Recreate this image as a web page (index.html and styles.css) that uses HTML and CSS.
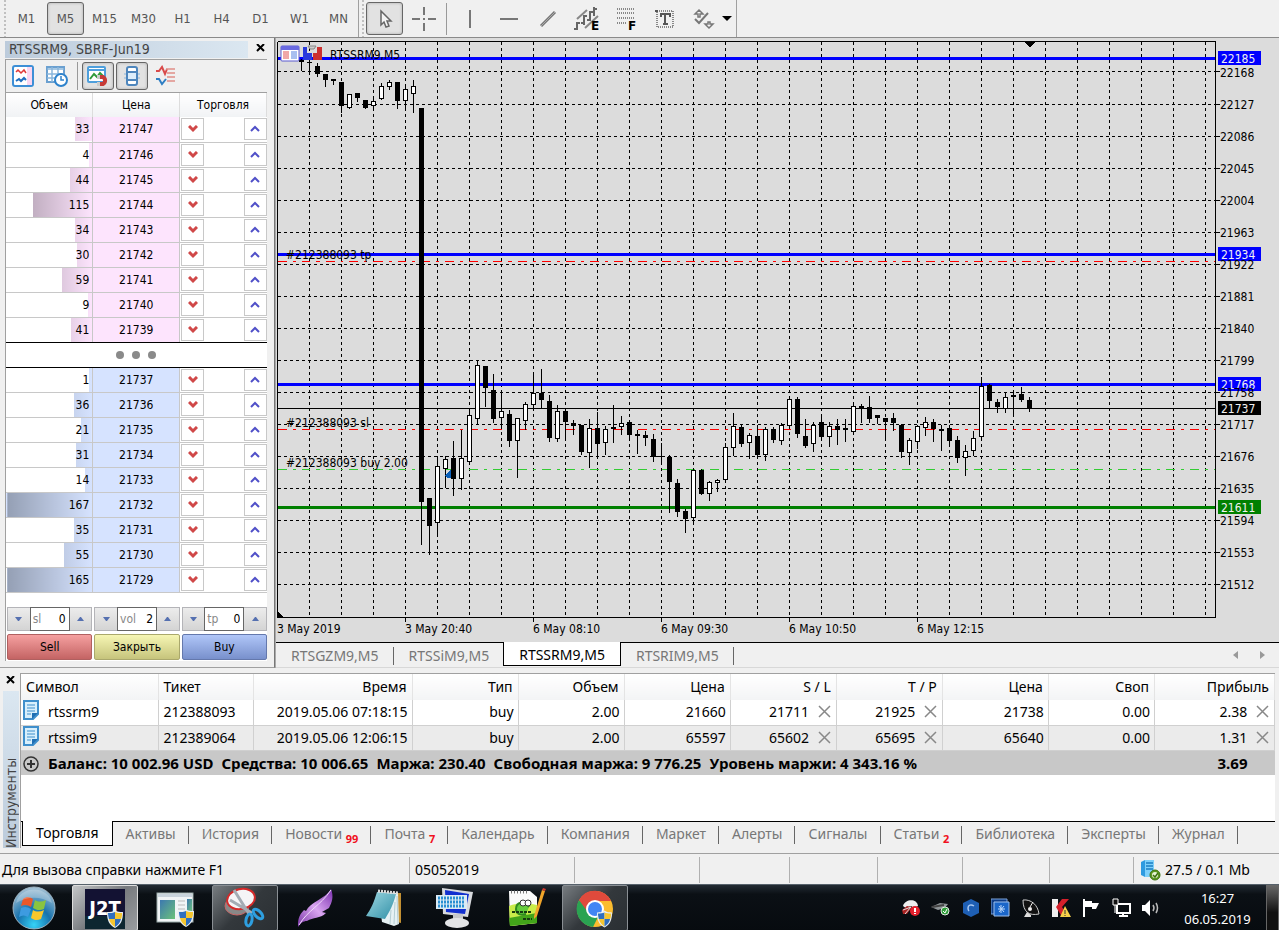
FILE: index.html
```html
<!DOCTYPE html>
<html lang="ru">

<head>
  <meta charset="UTF-8">
  <meta name="viewport" content="width=device-width, initial-scale=1.0">
  <title>RTSSRM9,M5</title>
  <link rel="stylesheet" href="styles.css">
</head>

<body>
  <header class="toolbar">
    <div class="toolbar-group">
      <span class="grip"></span>
      <button class="tool">M1</button>
      <button class="tool active">M5</button>
      <button class="tool">M15</button>
      <button class="tool">M30</button>
      <button class="tool">H1</button>
      <button class="tool">H4</button>
      <button class="tool">D1</button>
      <button class="tool">W1</button>
      <button class="tool">MN</button>
    </div>
    <div class="toolbar-group">
      <span class="grip"></span>
      <button class="tool active" aria-label="Cursor">
        <svg width="26" height="26"><path d="M9 5v14l3-3 2 5 3-1-2-5h4z" fill="#f4f4f4" stroke="#666" stroke-width="1.5"/></svg>
      </button>
      <button class="tool" aria-label="Crosshair">
        <svg width="26" height="26"><path d="M13 1v8M13 17v8M1 13h8M17 13h8M12 13h2" stroke="#777" stroke-width="2"/></svg>
      </button>
      <span class="divider"></span>
      <button class="tool" aria-label="Vertical line">
        <svg width="26" height="26"><path d="M13 4v18" stroke="#777" stroke-width="2"/></svg>
      </button>
      <button class="tool" aria-label="Horizontal line">
        <svg width="26" height="26"><path d="M4 13h18" stroke="#777" stroke-width="2"/></svg>
      </button>
      <button class="tool" aria-label="Trend line">
        <svg width="26" height="26"><path d="M6 20L20 6" stroke="#777" stroke-width="3"/><path d="M6 20L20 6" stroke="#aaa"/></svg>
      </button>
      <button class="tool" aria-label="Equidistant channel">
        <svg width="30" height="28" viewBox="-2 -1 30 28"><path d="M3 13L13 4M11 22L24 10" stroke="#888" stroke-width="2"/><path d="M3 16v8M0 23h3M3 17h3M10 9v10M7 17h3M10 10h3M16 5v10M13 14h3M16 6h3M20 1v9M20 3h3" stroke="#666" stroke-width="2"/><text class="icon-letter" x="17" y="24">E</text></svg>
      </button>
      <button class="tool" aria-label="Fibonacci">
        <svg width="30" height="28" viewBox="-2 -1 30 28"><path d="M4 3h18M4 7h18M4 12h18M4 17h10" stroke="#888" stroke-width="2" stroke-dasharray="1 1"/><text class="icon-letter" x="15" y="24">F</text></svg>
      </button>
      <button class="tool" aria-label="Text">
        <svg width="26" height="26"><rect x="5" y="5" width="16" height="16" fill="none" stroke="#666" stroke-width="1.5" stroke-dasharray="1 1"/><path d="M3 4h3v2H3z" fill="#555"/><path d="M9 11V8h9v3M13 8v10M11 18h5" fill="none" stroke="#555" stroke-width="2"/></svg>
      </button>
      <button class="tool" aria-label="Objects">
        <svg width="26" height="26"><path d="M8 4l4 4H9v3H7V8H4zM18 22l-4-4h3v-2h2v2h3z" fill="#f4f4f4" stroke="#777" stroke-width="1.5"/><path d="M4 13l4 4 9-10" fill="none" stroke="#777" stroke-width="2"/></svg>
      </button>
      <svg class="caret" width="10" height="6"><path d="M0 0h10L5 5z"/></svg>
    </div>
  </header>

  <main class="workspace">
    <aside class="depth">
      <div class="depth-title">
        <h2>RTSSRM9, SBRF-Jun19</h2>
        <button class="close" aria-label="Close"><svg width="9" height="8"><path d="M1 0l7 7M8 0L1 7" stroke="#000" stroke-width="2"/></svg></button>
      </div>
      <div class="depth-body">
        <div class="depth-tools">
          <button aria-label="Ticks">
            <svg width="22" height="22"><rect x="1" y="1" width="20" height="20" rx="2" fill="#fff" stroke="#3d8fd6" stroke-width="2"/><path d="M15 2h5v18h-5z" fill="#fbd6f0"/><path d="M4 7l2-2 3 3 3-3 2 3" fill="none" stroke="#e03a3a" stroke-width="1.5"/><path d="M4 16l3-2 2 2 3-3 2 2" fill="none" stroke="#1f6fc0" stroke-width="2"/></svg>
          </button>
          <button aria-label="Time and sales">
            <svg width="22" height="22"><path d="M1 2h17v15H1z" fill="#fff" stroke="#6ba0d0" stroke-width="2"/><path d="M1 4h17M1 9h17M1 13h17M6 2v15M12 2v15" stroke="#8ab6dc" stroke-width="1.5"/><circle cx="15" cy="15" r="6" fill="#fff" stroke="#2f83cc" stroke-width="2"/><path d="M15 11v4h3" fill="none" stroke="#2f83cc" stroke-width="1.5"/></svg>
          </button>
          <span class="divider"></span>
          <button class="active" aria-label="Lock">
            <svg width="22" height="22"><rect x="1" y="2" width="17" height="15" rx="1" fill="#fff" stroke="#4e9fdc" stroke-width="2"/><path d="M1 5h17" stroke="#4e9fdc" stroke-width="2"/><path d="M3 14l4-5 3 3 3-4 3 3" fill="none" stroke="#2f9a3a" stroke-width="2"/><path d="M11 12h5a4 4 0 010 7h-5" fill="none" stroke="#c63b37" stroke-width="4"/><path d="M10 10h3v4h-3zM10 17h3v4h-3z" fill="#ccc"/></svg>
          </button>
          <button class="active" aria-label="Center">
            <svg width="22" height="22"><rect x="6" y="2" width="10" height="18" rx="2" fill="#fff" stroke="#4e86bd" stroke-width="2"/><path d="M7 8h8v6H7z" fill="#dcedfb"/><path d="M5 7h12M5 15h12" stroke="#4e86bd" stroke-width="2"/><path d="M4 8v2M18 8v2M4 12v2M18 12v2" stroke="#8ab6dc"/></svg>
          </button>
          <button aria-label="Spread">
            <svg width="22" height="22"><path d="M1 6h3l3-4 3 7 2-5" fill="none" stroke="#d94a4a" stroke-width="2"/><path d="M1 14h3l3 5 4-5" fill="none" stroke="#2f7fc4" stroke-width="2"/><path d="M11 4h9M12 8h8M12 12h8M12 16h8" stroke="#e08e88" stroke-width="1.5"/></svg>
          </button>
        </div>
        <table class="depth-table">
          <thead>
            <tr><th>Объем</th><th>Цена</th><th>Торговля</th></tr>
          </thead>
          <tbody class="asks" id="asks"></tbody>
          <tbody class="spread">
            <tr><td colspan="3"><i></i><i></i><i></i></td></tr>
          </tbody>
          <tbody class="bids" id="bids"></tbody>
        </table>
        <form class="order">
          <div class="spinner">
            <button type="button" aria-label="Decrease sl"><svg width="7" height="4"><path d="M0 0h7L4 4H3z"/></svg></button>
            <label>sl <input type="text" value="0"></label>
            <button type="button" aria-label="Increase sl"><svg width="7" height="4"><path d="M0 4h7L4 0H3z"/></svg></button>
          </div>
          <div class="spinner">
            <button type="button" aria-label="Decrease vol"><svg width="7" height="4"><path d="M0 0h7L4 4H3z"/></svg></button>
            <label>vol <input type="text" value="2"></label>
            <button type="button" aria-label="Increase vol"><svg width="7" height="4"><path d="M0 4h7L4 0H3z"/></svg></button>
          </div>
          <div class="spinner">
            <button type="button" aria-label="Decrease tp"><svg width="7" height="4"><path d="M0 0h7L4 4H3z"/></svg></button>
            <label>tp <input type="text" value="0"></label>
            <button type="button" aria-label="Increase tp"><svg width="7" height="4"><path d="M0 4h7L4 0H3z"/></svg></button>
          </div>
          <button type="button" class="deal sell">Sell</button>
          <button type="button" class="deal flat">Закрыть</button>
          <button type="button" class="deal buy">Buy</button>
        </form>
      </div>
    </aside>

    <section class="charts">
      <svg class="chart" id="chart"></svg>
      <nav class="chart-tabs">
        <a href="#">RTSGZM9,M5</a>
        <a href="#">RTSSiM9,M5</a>
        <a href="#" class="active">RTSSRM9,M5</a>
        <a href="#">RTSRIM9,M5</a>
        <span class="tab-arrows">
          <button aria-label="Previous"><svg width="5" height="8"><path d="M5 0v8L0 4z" fill="#999"/></svg></button>
          <button aria-label="Next"><svg width="5" height="8"><path d="M0 0v8l5-4z" fill="#999"/></svg></button>
        </span>
      </nav>
    </section>
  </main>

  <section class="terminal">
    <div class="terminal-side">
      <button class="close" aria-label="Close"><svg width="9" height="8"><path d="M1 0l7 7M8 0L1 7" stroke="#000" stroke-width="2"/></svg></button>
      <h2>Инструменты</h2>
    </div>
    <div class="terminal-body">
      <table class="trades">
        <colgroup>
          <col class="c-symbol"><col class="c-ticket"><col class="c-time">
          <col><col><col><col><col><col><col>
          <col class="c-profit">
        </colgroup>
        <thead>
          <tr>
            <th>Символ</th><th>Тикет</th><th>Время</th><th>Тип</th><th>Объем</th><th>Цена</th>
            <th>S / L</th><th>T / P</th><th>Цена</th><th>Своп</th><th>Прибыль</th>
          </tr>
        </thead>
        <tbody id="trades"></tbody>
        <tfoot>
          <tr>
            <td colspan="10">
              <svg class="plus" width="16" height="16"><circle cx="8" cy="8" r="7" fill="none" stroke="#333" stroke-width="1.5"/><path d="M8 4v8M4 8h8" stroke="#333" stroke-width="2"/></svg><b>Баланс: 10 002.96 USD</b><b>Средства: 10 006.65</b><b>Маржа: 230.40</b><b>Свободная маржа: 9 776.25</b><b>Уровень маржи: 4 343.16 %</b>
            </td>
            <td class="total">3.69</td>
          </tr>
        </tfoot>
      </table>
      <nav class="terminal-tabs">
        <a href="#" class="active">Торговля</a>
        <a href="#">Активы</a>
        <a href="#">История</a>
        <a href="#">Новости <sub>99</sub></a>
        <a href="#">Почта <sub>7</sub></a>
        <a href="#">Календарь</a>
        <a href="#">Компания</a>
        <a href="#">Маркет</a>
        <a href="#">Алерты</a>
        <a href="#">Сигналы</a>
        <a href="#">Статьи <sub>2</sub></a>
        <a href="#">Библиотека</a>
        <a href="#">Эксперты</a>
        <a href="#">Журнал</a>
      </nav>
    </div>
  </section>

  <div class="status">
    <span>Для вызова справки нажмите F1</span>
    <span>05052019</span>
    <span></span>
    <span></span>
    <span></span>
    <span></span>
    <span></span>
    <span></span>
    <span class="traffic">
      <svg width="22" height="22"><path d="M2 3l4-2h9v17H6l-4-2z" fill="#2f9be0"/><path d="M6 1h9v17H6z" fill="#7fd0fa"/><path d="M7 4h7M7 7h7M7 10h7" stroke="#1c7fc4" stroke-width="1.5"/><circle cx="16" cy="16" r="5" fill="#5d9a1f" stroke="#3c7010"/><circle cx="16" cy="16" r="3" fill="#e8f4d8"/><path d="M14 16l2 2 3-4" fill="none" stroke="#3c7010" stroke-width="1.5"/></svg>
      27.5 / 0.1 Mb
    </span>
  </div>

  <footer class="taskbar">
    <svg width="0" height="0" class="defs">
      <defs>
        <radialGradient id="orb" cx="50%" cy="90%" r="90%">
          <stop offset="0" stop-color="#35d3f7"/><stop offset=".45" stop-color="#1772ad"/><stop offset="1" stop-color="#a9c4d6"/>
        </radialGradient>
        <linearGradient id="feather" x1="0" y1="1" x2="1" y2="0">
          <stop offset="0" stop-color="#7b36a8"/><stop offset=".5" stop-color="#d9a5f0"/><stop offset="1" stop-color="#7a2fae"/>
        </linearGradient>
        <linearGradient id="pad" x1="0" y1="0" x2="1" y2="1">
          <stop offset="0" stop-color="#9fd8e2"/><stop offset="1" stop-color="#2f8fa6"/>
        </linearGradient>
        <linearGradient id="screen" x1="0" y1="0" x2="1" y2="1">
          <stop offset="0" stop-color="#3c78b0"/><stop offset="1" stop-color="#6cc27a"/>
        </linearGradient>
        <symbol id="shield" viewBox="0 0 16 18">
          <path d="M8 0c2 2 5 2 8 2 0 8-2 13-8 16C2 15 0 10 0 2c3 0 6 0 8-2z" fill="#e8eef4"/>
          <path d="M8 2v7H2a20 20 0 01-1-6c3 0 5 0 7-1z" fill="#2f6fc0"/><path d="M8 2v7h6c1-2 1-4 1-6-3 0-5 0-7-1z" fill="#f6c62f"/>
          <path d="M2 9h6v8c-3-2-5-4-6-8z" fill="#f6c62f"/><path d="M14 9H8v8c3-2 5-4 6-8z" fill="#2f6fc0"/>
        </symbol>
      </defs>
    </svg>
    <button class="start" aria-label="Start">
      <svg width="44" height="44"><circle cx="22" cy="22" r="21" fill="url(#orb)" stroke="#9fb4c2"/><path d="M11 13c4-3 7-2 10 0l-2 8c-3-2-6-3-10-1z" fill="#e9582a"/><path d="M23 14c3 2 7 2 11 0l-2 9c-4 2-8 1-11-1z" fill="#8ac43f"/><path d="M9 22c4-2 7-1 10 1l-3 8c-3-2-6-2-9 0z" fill="#3d9be0"/><path d="M21 24c3 2 7 2 11 0l-3 9c-4 2-7 1-10-1z" fill="#fac72b"/><path d="M4 17C8-1 36-1 40 17c-12-7-24-7-36 0z" fill="#fff" opacity=".25"/></svg>
    </button>
    <button class="task lit" aria-label="J2T">
      <svg width="44" height="44"><rect x="2" y="3" width="40" height="40" fill="#131233"/><path d="M2 30h40v13H2z" fill="#0d2630"/><text class="logo-text" x="22" y="29">J2T</text><use href="#shield" x="24" y="24" width="16" height="18"/></svg>
    </button>
    <button class="task" aria-label="Application">
      <svg width="44" height="44"><rect x="4" y="7" width="36" height="29" fill="#f1f4f6" stroke="#9aa"/><path d="M5 8h34v3H5z" fill="#c9d3dc"/><path d="M7 14h15v19H7z" fill="url(#screen)"/><path d="M25 15h7M25 19h7M25 23h7M25 27h7" stroke="#bbb"/><path d="M34 13h5v13h-5z" fill="url(#screen)"/><use href="#shield" x="25" y="23" width="16" height="18"/></svg>
    </button>
    <button class="task open" aria-label="Snipping tool">
      <svg width="44" height="44"><ellipse cx="14" cy="20" rx="12" ry="9" fill="#888" stroke="#c66"/><ellipse cx="18" cy="13" rx="14" ry="10" fill="#f5f5f7" stroke="#d42a2a" stroke-width="2" transform="rotate(-12 18 13)"/><path d="M11 4l15 24M7 14l22 13" stroke="#a4acb4" stroke-width="3"/><ellipse cx="26" cy="34" rx="3" ry="6" fill="none" stroke="#2e9fe0" stroke-width="3" transform="rotate(12 26 34)"/><ellipse cx="35" cy="28" rx="3" ry="6" fill="none" stroke="#2e9fe0" stroke-width="3" transform="rotate(-45 35 28)"/></svg>
    </button>
    <button class="task" aria-label="Feather">
      <svg width="44" height="44"><path d="M5 41c0-6 0-11 6-17l2 1C17 16 32 13 38 3c3 8 1 13-2 19l-7 4 4 1c-6 6-13 4-19 8-4 0-6 2-9 6z" fill="url(#feather)"/><path d="M6 39C15 24 27 20 38 4" fill="none" stroke="#f0dcfa"/></svg>
    </button>
    <button class="task" aria-label="Notepad">
      <svg width="44" height="44"><path d="M34 7h4v30l-4-1z" fill="#c39033"/><path d="M15 6l20 1 1 31-5 2-12-4z" fill="#e6f1f4"/><path d="M14 6l19 2c-3 11-6 17-11 25L3 30C8 23 11 16 14 6z" fill="url(#pad)"/><path d="M34 10l1 28M32 16l-1 22M28 24l-1 14" stroke="#b4cdd3"/><path d="M15 5l20 2" stroke="#ddd" stroke-width="3" stroke-dasharray="2 1"/></svg>
    </button>
    <button class="task" aria-label="Remote desktop">
      <svg width="44" height="44"><path d="M9 2l31 4-5 25L10 28z" fill="#d8dade"/><path d="M12 4l24 4-4 20-19-2z" fill="#1230cf"/><path d="M20 28h10v8H20z" fill="#c6c8cb"/><ellipse cx="24" cy="37" rx="12" ry="5" fill="#e3e4e6"/><path d="M3 9h31v14H3z" fill="#dbeaf4"/><path d="M5 12h27M5 16h27M5 20h27" stroke="#2a8fd2" stroke-width="3" stroke-dasharray="2 1"/></svg>
    </button>
    <button class="task" aria-label="Notepad++">
      <svg width="44" height="44"><path d="M6 5h21l7 6v26L7 40z" fill="#fafafa"/><path d="M6 20c9-4 18-3 28-1v18L7 40z" fill="#c9ec4a"/><path d="M6 32l28-5v10L7 40z" fill="#43a51a"/><path d="M8 6h18" stroke="#777" stroke-width="3" stroke-dasharray="1 2"/><path d="M26 21c-4-7-13-5-13 2 0 5 5 7 10 5" fill="#65cc3d" stroke="#2f8a1f" stroke-width="2"/><circle cx="20" cy="17" r="3" fill="#fff" stroke="#333"/><circle cx="25" cy="17" r="3" fill="#fff" stroke="#333"/><path d="M9 26h20M20 33h9" stroke="#173a10" stroke-width="2" stroke-dasharray="3 1"/><path d="M31 30L39 4l3 1-8 25-3 3z" fill="#f0a52a"/><path d="M39 4l1-2 3 1-1 2z" fill="#d43b2f"/></svg>
    </button>
    <button class="task open" aria-label="Chrome">
      <svg width="44" height="44"><circle cx="22" cy="23" r="18" fill="#fbbc2f"/><path d="M6 14a18 18 0 0014 27l7-14-5-4z" fill="#2aa352"/><path d="M6 14a18 18 0 0132 1H22l-8 10z" fill="#e04a3c"/><circle cx="22" cy="23" r="9" fill="#fff"/><circle cx="22" cy="23" r="7" fill="#4285f4"/><use href="#shield" x="24" y="24" width="15" height="18"/></svg>
    </button>

    <div class="tray">
      <svg width="20" height="20"><path d="M2 8c2-7 14-8 15 0l-4 2c-3-3-5-2-7 1z" fill="#eee"/><path d="M1 12l5-4 5 1-5 7H2z" fill="#a22"/><path d="M2 12l8-3-6 7" fill="none" stroke="#ddd"/><circle cx="14" cy="13" r="5" fill="#e3202c"/><path d="M14 10v4M14 15v1" stroke="#fff" stroke-width="2"/></svg>
      <svg width="20" height="20"><path d="M0 9l9-4 8 1-3 4-7 2z" fill="#8e9497"/><path d="M1 9l12-2" stroke="#444" stroke-width="2"/><circle cx="14" cy="13" r="4" fill="#2f9e3a" stroke="#dfe8df"/><path d="M12 13l2 2 2-4" fill="none" stroke="#fff"/></svg>
      <svg width="20" height="20"><path d="M10 1l8 4v10l-8 4-8-4V5z" fill="#1e5fb4"/><path d="M13 8c-3-2-6-1-6 2 0 1 0 2 1 3" fill="none" stroke="#a9c9f2" stroke-width="1.5"/></svg>
      <svg width="20" height="20"><path d="M0 1h16v15H0z" fill="#0f3c86" stroke="#7ba2d8"/><path d="M3 4h15v14H3z" fill="#1b66c9" stroke="#9ec0ee"/><path d="M10 7v8M7 11h7M8 8l5 6M13 8l-5 6" stroke="#bcd8fb"/></svg>
      <svg width="20" height="20"><path d="M2 2c0 12 6 16 16 14C17 7 10 1 2 2z" fill="#111" stroke="#ccc"/><path d="M9 9l3-5" stroke="#eee"/><circle cx="9" cy="11" r="2" fill="#eee"/><path d="M3 19l3-5 4 3v2z" fill="#ddd"/></svg>
      <svg width="20" height="20"><path d="M1 1h6v18H1z" fill="#eee"/><path d="M5 9l6-8h7l-7 8 7 10h-7z" fill="#d5202b"/><path d="M14 8l6 11H9z" fill="#f6d04a"/><path d="M14 12v4M14 17v1" stroke="#333"/></svg>
      <svg width="20" height="20"><path d="M3 1v18" stroke="#fff" stroke-width="2"/><path d="M4 3h7v2h7l-3 6h-4V9H4z" fill="#fff"/></svg>
      <svg width="20" height="20"><path d="M6 6h13v9H6zM12 15v4M8 18h9" fill="none" stroke="#fff" stroke-width="2"/><path d="M2 1h5v6H2zM4 7v8" fill="#111" stroke="#fff"/></svg>
      <svg width="20" height="20"><path d="M1 7h3l5-5v16l-5-5H1z" fill="#fff"/><path d="M12 7q2 3 0 6M15 5q3 5 0 10" fill="none" stroke="#bbb" stroke-width="1.5"/></svg>
    </div>
    <time class="clock">16:27<br>06.05.2019</time>
    <button class="peek" aria-label="Show desktop"></button>
  </footer>

  <script src="script.js"></script>
</body>

</html>
```
FILE: styles.css
```css
*,
*::before,
*::after {
  box-sizing: border-box;
}
body {
  display: flex;
  flex-flow: column;
  min-height: 100vh;
  margin: 0;
  background: #f0f0f0;
  color: #000;
  font: 12px/16px "DejaVu Sans Condensed", "DejaVu Sans", sans-serif;
}
h2 {
  margin: 0;
  font-size: 14px;
  font-weight: normal;
}
a {
  color: inherit;
  text-decoration: none;
}
button {
  display: flex;
  align-items: center;
  justify-content: center;
  padding: 0;
  border: 0;
  background: none;
  color: inherit;
  font: inherit;
}
svg {
  flex: none;
}
table {
  width: 100%;
  border-collapse: collapse;
  table-layout: fixed;
}

/* toolbar */
.toolbar {
  display: flex;
  height: 38px;
  border-bottom: 1px solid #8a8a8a;
}
.toolbar-group {
  display: flex;
  align-items: center;
  gap: 2px;
  padding: 0 4px 0 3px;
  border-right: 1px solid #a0a0a0;
}
.toolbar-group:first-child {
  padding: 0 1px 0 4px;
}
.grip {
  align-self: stretch;
  width: 2px;
  background: repeating-linear-gradient(#c0c0c0 0 2px, #f0f0f0 2px 4px);
}
.tool {
  width: 37px;
  height: 33px;
  color: #555;
  font-size: 13px;
}
.active.tool,
.depth-tools .active {
  border: 1px solid #666;
  border-radius: 3px;
  background: #e2e2e2;
  box-shadow: inset 0 0 3px #aaa;
}
.divider {
  width: 1px;
  height: 32px;
  margin: 0 2px;
  background: #999;
}
.caret {
  margin-left: -2px;
}
.icon-letter {
  font: bold 12px "DejaVu Sans", sans-serif;
}

/* depth of market */
.workspace {
  display: flex;
  flex: 1;
}
.depth {
  display: flex;
  flex-flow: column;
  width: 275px;
  padding: 3px 7px 6px 5px;
  border-right: 1px solid #777;
  border-bottom: 1px solid #a0a0a0;
}
.depth-title {
  display: flex;
  justify-content: space-between;
  height: 18px;
}
.depth-title h2 {
  width: 243px;
  height: 17px;
  padding-left: 4px;
  background: linear-gradient(90deg, #bccbdb, #dbe7f1);
  color: #444;
  line-height: 17px;
}
.close {
  width: 14px;
  height: 14px;
}
.depth-body {
  flex: 1;
  border: 1px solid #a0a0a0;
  border-right: 0;
  border-bottom: 0;
  background: #fff;
}
.depth-tools {
  display: flex;
  align-items: center;
  gap: 2px;
  height: 33px;
  padding-left: 1px;
  border-bottom: 1px solid #a0a0a0;
  background: #f0f0f0;
}
.depth-tools button {
  width: 32px;
  height: 28px;
}
.depth-tools .divider {
  height: 28px;
}
.depth-table {
  text-align: center;
}
.depth-table th {
  height: 24px;
  padding: 0;
  border-right: 1px solid #ddd;
  background: linear-gradient(#fff, #f1f3f5);
  font-weight: normal;
}
.depth-table td {
  height: 25px;
  padding: 0;
  border-right: 1px solid #c8c8c8;
  border-bottom: 1px solid #c8c8c8;
}
.depth-table td:last-child {
  border-right: 0;
}
.volume {
  height: 24px;
  margin-left: auto;
  padding-right: 3px;
  background: right / 85px 100%;
  direction: rtl;
  line-height: 24px;
  text-align: right;
  white-space: nowrap;
}
.asks .volume {
  background-image: linear-gradient(90deg, #a898a8, #fde4fd);
}
.asks .price {
  background: #fde4fd;
}
.bids .volume {
  background-image: linear-gradient(90deg, #949fb4, #d6e3ff);
}
.bids .price {
  background: #d6e3ff;
}
.asks tr:last-child td,
.spread td {
  border-bottom-color: #000;
}
.spread i {
  display: inline-block;
  width: 8px;
  height: 8px;
  margin: 0 4px;
  border-radius: 50%;
  background: #8a8a8a;
}
.trade {
  display: flex;
  justify-content: space-between;
  padding-left: 1px;
}
.trade button {
  width: 23px;
  height: 22px;
  border: 1px solid #c8c8c8;
}
.order {
  display: grid;
  grid-template-columns: repeat(3, 1fr);
  gap: 3px 2px;
  padding: 14px 0 0 1px;
}
.spinner {
  display: flex;
  height: 24px;
  border: 1px solid #b4b4b8;
}
.spinner button {
  flex: 1;
  background: linear-gradient(#ececec, #d4d4d4);
  fill: #5570b0;
}
.spinner label {
  display: flex;
  align-items: center;
  width: 40px;
  margin: -1px 0;
  padding: 0 3px 0 2px;
  border: 1px solid #666;
  background: #fff;
  color: #888;
}
.spinner input {
  flex: 1;
  min-width: 0;
  padding: 0;
  border: 0;
  background: none;
  font: inherit;
  text-align: right;
}
.deal {
  height: 26px;
  border: 1px solid #999;
  border-radius: 2px;
}
.sell {
  border-color: #b06060;
  background: linear-gradient(#f5a0a0, #c46464);
}
.flat {
  border-color: #aaa86c;
  background: linear-gradient(#f6f6b4, #c6c47c);
}
.buy {
  border-color: #6478ac;
  background: linear-gradient(#b0c6f8, #7890cc);
}

/* chart */
.charts {
  display: flex;
  flex: 1;
  flex-flow: column;
  min-width: 0;
  border-left: 1px solid #aaa;
}
.chart {
  display: block;
  flex: 1;
  width: 100%;
  min-height: 604px;
  background: #dcdcdc;
  shape-rendering: crispEdges;
}
.chart text {
  font: 12px "DejaVu Sans Condensed", "DejaVu Sans", sans-serif;
}
.chart .tag {
  fill: #f0f0f0;
}
.chart .icons {
  shape-rendering: auto;
}
.grid {
  stroke: #000;
  stroke-dasharray: 3 3;
}
.level {
  stroke-width: 3;
}
.order-line {
  stroke-dasharray: 9 6 3 6;
}
.chart-tabs {
  display: flex;
  height: 26px;
  border-top: 1px solid #000;
  border-bottom: 1px solid #d8d8d8;
  color: #777;
  font: 14px/25px "Noto Sans", sans-serif;
}
.chart-tabs a {
  position: relative;
  padding: 0 15px;
}
.chart-tabs a::after,
.terminal-tabs a::after {
  content: "";
  position: absolute;
  top: 4px;
  right: 0;
  width: 1px;
  height: 18px;
  background: #666;
}
.chart-tabs .active,
.terminal-tabs .active {
  border: 1px solid #000;
  border-top: 0;
  background: #fff;
  color: #000;
}
.chart-tabs .active {
  height: 24px;
  margin: -1px 0 0 -1px;
}
.chart-tabs .active::after,
.terminal-tabs .active::after {
  content: none;
}
.tab-arrows {
  display: flex;
  gap: 22px;
  margin-left: auto;
  padding-right: 14px;
}

/* terminal */
.terminal {
  display: flex;
  height: 186px;
  padding: 5px 4px 5px 0;
  border-bottom: 1px solid #a0a0a0;
  font: 14px/24px "Noto Sans", sans-serif;
}
.terminal-side {
  display: flex;
  flex-flow: column;
  width: 20px;
  padding-left: 3px;
}
.terminal-side .close {
  margin-bottom: 4px;
}
.terminal-side h2 {
  flex: 1;
  width: 16px;
  background: linear-gradient(#bccbdb, #dbe7f1);
  color: #444;
  font: 14px/16px "DejaVu Sans Condensed", sans-serif;
  writing-mode: vertical-rl;
  transform: rotate(180deg);
}
.terminal-body {
  display: flex;
  flex: 1;
  flex-flow: column;
  border: 1px solid #a0a0a0;
  border-width: 1px 0 0 1px;
  background: #fff;
}
.c-symbol {
  width: 137px;
}
.c-ticket {
  width: 95px;
}
.c-time {
  width: 159px;
}
.c-profit {
  width: 120px;
}
.trades th,
.trades td {
  height: 25px;
  padding: 0 4px 0 5px;
  border-right: 1px solid #d0d0d0;
  text-align: right;
  white-space: nowrap;
}
.trades th {
  height: 26px;
  padding: 0 5px;
  border-color: #e4e4e4;
  background: linear-gradient(#fff, #f3f4f5);
  font-weight: normal;
}
.trades th:nth-child(-n+2),
.trades td:nth-child(-n+2) {
  text-align: left;
}
.trades tbody tr {
  border-bottom: 1px solid #d0d0d0;
}
.trades tbody tr:nth-child(2) {
  background: #ebebeb;
}
.trades svg {
  margin: 0 1px 0 5px;
  vertical-align: -1px;
}
.trades .doc,
.trades .plus {
  margin: 0 9px 0 -3px;
  vertical-align: -3px;
}
.trades tfoot td {
  border: 0;
  background: #c8c8c8;
  font-size: 15px;
  font-weight: bold;
}
.trades b {
  margin-right: 8px;
  font-weight: inherit;
}
.trades tfoot .total {
  padding-right: 27px;
  text-align: right;
}
.terminal-tabs {
  display: flex;
  height: 27px;
  margin-top: auto;
  padding-left: 1px;
  border-top: 1px solid #000;
  background: #f0f0f0;
  color: #777;
}
.terminal-tabs a {
  position: relative;
  padding: 0 13px;
  white-space: nowrap;
}
.terminal-tabs .active {
  height: 25px;
  margin-top: -1px;
}
.terminal-tabs sub {
  color: #f01020;
  font-size: 11px;
  font-weight: bold;
  line-height: 0;
}

/* status bar */
.status {
  display: grid;
  grid-template-columns: 409fr 165fr 125fr 90fr 88fr 85fr 87fr 84fr 146fr;
  align-items: center;
  height: 30px;
  padding: 3px 0 1px;
  font: 14px/26px "Noto Sans", sans-serif;
  white-space: nowrap;
}
.status span {
  height: 26px;
  padding-left: 5px;
  border-left: 1px solid #b0b0b0;
}
.status span:first-child {
  padding-left: 2px;
  border: 0;
}
.status .traffic {
  display: flex;
  align-items: center;
  gap: 4px;
}

/* taskbar */
.taskbar {
  display: flex;
  gap: 4px;
  height: 47px;
  border-top: 1px solid #56616b;
  background: linear-gradient(#232b33, #0b1015 20%, #070b0f);
  color: #fff;
}
.defs {
  position: absolute;
}
.start {
  width: 68px;
}
.task {
  width: 66px;
  border: 1px solid transparent;
  border-radius: 2px;
}
.task.lit {
  border-color: #ddd;
  background: linear-gradient(135deg, #c4c6c8, #777a7e 50%, #9a9da0);
}
.task.open {
  border-color: #8a8f94;
  background: linear-gradient(135deg, #777c80, #33383c 50%, #2a2f33);
}
.logo-text {
  fill: #fff;
  font: bold 20px "DejaVu Sans Condensed", sans-serif;
  text-anchor: middle;
}
.tray {
  display: flex;
  align-items: center;
  gap: 10px;
  margin-left: auto;
}
.clock {
  width: 97px;
  padding: 3px 0 0 8px;
  font: 13px/21px "Noto Sans", sans-serif;
  text-align: center;
}
.peek {
  width: 13px;
  border: 1px solid #666;
  background: linear-gradient(#666, #111 60%);
}
```
FILE: script.js
```js
const asks = [[33, 21747], [4, 21746], [44, 21745], [115, 21744], [34, 21743], [30, 21742], [59, 21741], [9, 21740], [41, 21739]]
const bids = [[1, 21737], [36, 21736], [21, 21735], [31, 21734], [14, 21733], [167, 21732], [35, 21731], [55, 21730], [165, 21729]]
const maxVolume = 167

const depthRow = ([volume, price]) => `
  <tr>
    <td><div class="volume" style="width: ${volume / maxVolume * 100}%">${volume}</div></td>
    <td class="price">${price}</td>
    <td>
      <div class="trade">
        <button aria-label="Sell ${price}"><svg width="10" height="8"><path d="M1 1l4 4 4-4" fill="none" stroke="#d04848" stroke-width="3"/></svg></button>
        <button aria-label="Buy ${price}"><svg width="10" height="8"><path d="M1 6l4-4 4 4" fill="none" stroke="#5050c8" stroke-width="2"/></svg></button>
      </div>
    </td>
  </tr>`
document.getElementById('asks').innerHTML = asks.map(depthRow).join('')
document.getElementById('bids').innerHTML = bids.map(depthRow).join('')

const trades = [
  ['rtssrm9', '212388093', '2019.05.06 07:18:15', 'buy', '2.00', '21660', '21711', '21925', '21738', '0.00', '2.38'],
  ['rtssim9', '212389064', '2019.05.06 12:06:15', 'buy', '2.00', '65597', '65602', '65695', '65640', '0.00', '1.31']
]
const closable = [6, 7, 10]
const doc = '<svg class="doc" width="16" height="20"><path d="M1 1h14v13l-5 5H1z" fill="#d8effc" stroke="#3f8fcc" stroke-width="2"/><path d="M4 5h8M4 8h8M4 11h8M4 14h4" stroke="#3f8fcc"/><path d="M15 13l-6 6v-6z" fill="#1f6fb4"/></svg>'
const cross = '<svg width="13" height="13"><path d="M1 1l11 11M12 1L1 12" stroke="#888" stroke-width="1.5"/></svg>'
document.getElementById('trades').innerHTML = trades.map(row =>
  `<tr>${row.map((cell, i) => `<td>${i === 0 ? doc : ''}${cell}${closable.includes(i) ? ` ${cross}` : ''}</td>`).join('')}</tr>`
).join('')

// high, body top, body bottom, low, 1 for a rising bar
const candles = [
  [58, 60, 62, 70, 0], [58, 62, 63, 72, 0], [62, 66, 74, 76, 0], [74, 74, 80, 86, 0], [79, 79, 81, 84, 0],
  [82, 82, 106, 112, 0], [94, 94, 108, 108, 1], [93, 93, 98, 101, 0], [99, 100, 108, 108, 0], [97, 101, 106, 109, 1],
  [82, 86, 99, 99, 1], [79, 82, 87, 89, 1], [82, 82, 101, 108, 0], [83, 89, 101, 110, 1], [79, 86, 94, 112, 1],
  [108, 108, 502, 544, 0], [498, 498, 526, 554, 0], [455, 466, 523, 536, 1], [455, 459, 469, 487, 1], [440, 458, 479, 495, 0],
  [429, 458, 479, 489, 1], [408, 415, 462, 464, 1], [360, 365, 419, 424, 1], [365, 366, 388, 406, 0], [373, 390, 419, 422, 0],
  [389, 411, 418, 428, 1], [409, 414, 441, 446, 0], [417, 418, 441, 477, 1], [401, 404, 421, 429, 1], [371, 393, 405, 409, 1],
  [368, 393, 400, 407, 0], [394, 401, 438, 441, 0], [404, 411, 439, 441, 1], [408, 411, 422, 440, 0], [419, 423, 426, 434, 0],
  [424, 425, 452, 454, 0], [418, 428, 453, 467, 1], [411, 428, 444, 457, 0], [425, 429, 443, 454, 1], [404, 427, 429, 442, 0],
  [415, 423, 427, 434, 1], [419, 422, 435, 440, 0], [429, 434, 436, 453, 0], [430, 435, 438, 445, 0], [433, 439, 457, 461, 0],
  [442, 456, 457, 464, 0], [454, 457, 482, 512, 0], [478, 483, 512, 516, 0], [508, 511, 519, 532, 0], [467, 470, 518, 522, 1],
  [468, 470, 494, 494, 0], [480, 482, 494, 500, 1], [478, 480, 483, 491, 1], [442, 447, 480, 482, 1], [412, 426, 448, 455, 1],
  [423, 427, 444, 446, 0], [432, 435, 443, 458, 1], [424, 436, 455, 456, 0], [426, 429, 455, 460, 1], [426, 429, 440, 442, 0],
  [422, 425, 441, 444, 1], [395, 399, 426, 428, 1], [396, 399, 434, 437, 0], [418, 436, 446, 447, 0], [421, 425, 444, 451, 1],
  [414, 422, 437, 440, 0], [421, 426, 437, 446, 1], [418, 426, 430, 444, 0], [418, 428, 430, 441, 0], [401, 406, 432, 434, 1],
  [403, 406, 409, 422, 0], [395, 407, 419, 422, 0], [414, 415, 418, 423, 0], [418, 418, 422, 439, 0], [412, 418, 423, 430, 0],
  [423, 425, 452, 457, 0], [437, 440, 453, 464, 1], [424, 426, 442, 448, 1], [416, 422, 428, 435, 1], [418, 422, 429, 441, 0],
  [424, 429, 431, 450, 0], [424, 428, 441, 446, 0], [435, 440, 458, 462, 0], [444, 451, 458, 475, 1], [430, 438, 451, 455, 1],
  [376, 386, 437, 439, 1], [383, 385, 401, 407, 0], [398, 402, 407, 412, 0], [392, 397, 409, 412, 1], [390, 395, 397, 415, 0],
  [386, 394, 400, 401, 0], [396, 400, 409, 411, 0]
]
const prices = [22168, 22127, 22086, 22045, 22004, 21963, 21922, 21881, 21840, 21799, 21758, 21717, 21676, 21635, 21594, 21553, 21512]
const times = ['3 May 2019', '3 May 20:40', '6 May 08:10', '6 May 09:30', '6 May 10:50', '6 May 12:15']
const levels = [[58, 22185, '#00f'], [254, 21934, '#00f'], [384, 21768, '#00f'], [507, 21611, '#008000']]
const orders = [[261, 254, '#212388093 tp', '#f00'], [429, 422, '#212388093 sl', '#f00'], [469, 462, '#212388093 buy 2.00', '#3c3']]

const chart = document.getElementById('chart')
// candle rows count from the window top, the pane starts below the toolbar
const top0 = 38
const left = 1
const paneTop = 3
const paneBottom = 579

const line = (x1, y1, x2, y2, attrs = 'stroke="#000"') =>
  `<line x1="${x1 + .5}" y1="${y1 + .5}" x2="${x2 + .5}" y2="${y2 + .5}" ${attrs}/>`
const text = (x, y, s, attrs = '') => `<text x="${x}" y="${y + 4}" ${attrs}>${s}</text>`

function draw () {
  const right = chart.clientWidth - 64
  let out = ''

  for (let x = left + 32; x < right; x += 32) out += line(x, paneTop, x, paneBottom, 'class="grid"')
  prices.forEach((price, i) => {
    const y = (i ? 72 : 71) + 32 * i - top0
    out += line(left, y, right, y, 'class="grid"')
    out += line(right, y, right + 4, y)
  })
  levels.forEach(([y, price, color]) => {
    out += line(left, y - top0, right, y - top0, `class="level" stroke="${color}"`)
  })
  orders.forEach(([y, ty, label, color]) => {
    out += line(left, y - top0, right, y - top0, `class="order-line" stroke="${color}"`)
  })
  out += line(left, 408 - top0, right, 408 - top0)

  candles.forEach(([high, a, b, low, up], i) => {
    const x = left + 24 + 8 * i
    out += line(x, high - top0, x, low - top0)
    out += up
      ? `<rect x="${x - 1.5}" y="${a - top0 + .5}" width="4" height="${Math.max(b - a - 1, 2)}" fill="#fff" stroke="#000"/>`
      : `<rect x="${x - 2}" y="${a - top0}" width="5" height="${b - a}"/>`
  })
  out += `<path d="M${left + 168} 437l6-6v9h-4z" fill="#0a5fb8"/>`
  orders.forEach(([y, ty, label]) => { out += text(left + 9, ty + 1 - top0, label) })

  out += line(left, paneTop, right, paneTop) + line(left, paneTop, left, paneBottom) +
    line(right, paneTop, right, paneBottom) + line(left, paneBottom, right, paneBottom)
  out += `<path d="M${left + 747} 4h11l-5 6zM${left} ${paneBottom}v-6l6 6z"/>`

  const tag = (y, price, color) =>
    `<rect x="${right + 3}" y="${y - 7 - top0}" width="43" height="14" fill="${color}"/>` + text(right + 6, y + 1 - top0, price, 'class="tag"')
  levels.forEach(([y, price, color]) => { out += tag(y, price, color) })
  out += tag(408, 21737, '#000')
  prices.forEach((price, i) => { out += text(right + 5, 73 + 32 * i - top0, price) })
  times.forEach((time, i) => {
    const x = left + 128 * i
    if (i) out += line(x, paneBottom, x, paneBottom + 4)
    out += text(x, 629 - top0, time)
  })

  out += text(left + 53, 55 - top0, 'RTSSRM9,M5')
  out += `<g class="icons">
    <rect x="5" y="8" width="18" height="15" rx="1" fill="#fff" stroke="#5a5ad0"/><path d="M5 8h18v4H5z" fill="#6a6ae0"/>
    <path d="M7 14h6M7 16h6M7 18h6M7 20h6" stroke="#e05050"/><path d="M15 14h6M15 16h6M15 18h6M15 20h6" stroke="#5080e0"/>
    <path d="M27 9h4v6h5v7h-9z" fill="#2a3bdc"/><path d="M46 9h-5v6h-4v7h9z" fill="#cc3030"/><path d="M32 8h8l-2 3h-4z" fill="#ccc" stroke="#888"/>
  </g>`
  chart.innerHTML = out
}
draw()
window.addEventListener('resize', draw)
```
